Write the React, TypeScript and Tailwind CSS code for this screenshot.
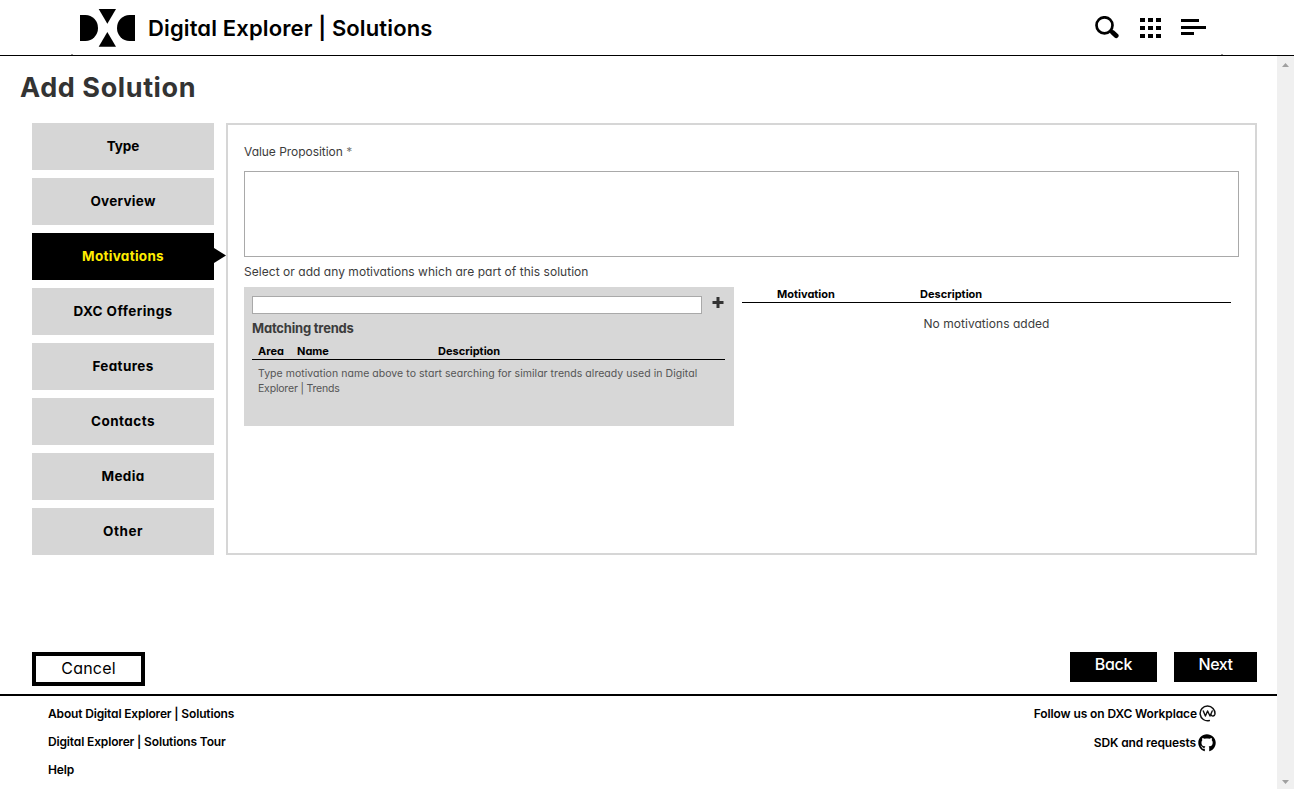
import { FaGithub } from "react-icons/fa";
import clsx from "clsx";

const steps = [
  { label: "Type", tracking: "tracking-[-0.1px]" },
  { label: "Overview", tracking: "tracking-[0.27px]" },
  { label: "Motivations", tracking: "tracking-[0.3px]" },
  { label: "DXC Offerings", tracking: "tracking-[0.43px]" },
  { label: "Features", tracking: "tracking-[0.37px]" },
  { label: "Contacts", tracking: "tracking-[0.45px]" },
  { label: "Media", tracking: "tracking-[0.35px]" },
  { label: "Other", tracking: "tracking-[0.55px]" },
];

function DxcLogo() {
  return (
    <svg width="55" height="38" viewBox="0 0 55 38" className="shrink-0">
      <path d="M0 6h5.500a12.500 13 0 0 1 0 26H0z" />
      <path d="M55 6h-5.500a12.500 13 0 0 0 0 26H55z" />
      <path d="M18.700 0h17.300L27.350 14.700z" />
      <path d="M18.700 37.800h17.300L27.350 23.100z" />
    </svg>
  );
}

function SearchIcon() {
  return (
    <svg width="24" height="23" viewBox="0 0 24 23" fill="none" stroke="black">
      <circle cx="9.500" cy="9.300" r="8" strokeWidth="2.700" />
      <path d="M15.200 14.700l1.500 1.500" strokeWidth="3" />
      <path d="M17.700 16.500l3.500 3.200" strokeWidth="4.800" strokeLinecap="round" />
    </svg>
  );
}

function WorkplaceIcon() {
  return (
    <svg width="17" height="17" viewBox="0 0 17 17" fill="none" stroke="#111" strokeLinecap="round" strokeLinejoin="round">
      <path d="M10.300 15.600A7.400 7.400 0 1 1 15.900 9.200C15.500 11.300 12.900 11.700 12 9.700" strokeWidth="1.500" />
      <path d="M4.300 6l2.100 5 2.200-5 2.400 5L13.200 6" strokeWidth="1.400" />
    </svg>
  );
}

function Header() {
  return (
    <header className="relative flex h-14 items-start border-b border-black pl-20">
      <div className="pt-[9px]">
        <DxcLogo />
      </div>
      <div className="ml-[13px] mt-3 text-[22px] font-semibold leading-8 tracking-[0.13px] whitespace-nowrap">
        Digital Explorer | Solutions
      </div>
      <div className="ml-auto mr-[88px] flex items-start">
        <button className="mt-[16px]">
          <SearchIcon />
        </button>
        <button className="ml-[21px] mt-[18px] grid grid-cols-3 gap-x-[3px] gap-y-[4px]">
          {Array.from({ length: 9 }, (_, i) => (
            <span key={i} className="h-[4px] w-[5px] bg-black" />
          ))}
        </button>
        <button className="ml-5 mt-[19px] flex w-[25px] flex-col gap-[3.500px]">
          <span className="h-[3px] w-[18px] bg-black" />
          <span className="h-[3px] w-[25px] bg-black" />
          <span className="h-[3px] w-[13px] bg-black" />
        </button>
      </div>
      <span className="absolute left-[71px] top-[54px] h-px w-[2px] bg-[#999]" />
      <span className="absolute left-[1221px] top-[54px] h-px w-[2px] bg-[#999]" />
    </header>
  );
}

function Steps() {
  return (
    <nav className="flex w-[182px] flex-col gap-2">
      {steps.map(({ label, tracking }) => {
        const active = label === "Motivations";
        return (
          <button
            key={label}
            className={clsx(
              "relative flex h-[47px] items-center justify-center text-[13.5px] font-bold",
              tracking,
              active ? "bg-black text-[#ffed00]" : "bg-[#d6d6d6] text-black",
            )}
          >
            {label}
            {active && (
              <svg width="12" height="16" viewBox="0 0 12 16" className="absolute top-[15px] left-full">
                <path d="M0 0l12 7.500L0 15z" />
              </svg>
            )}
          </button>
        );
      })}
    </nav>
  );
}

function Panel() {
  return (
    <section className="ml-3 h-[432px] w-[1031px] border-2 border-[#d6d6d6] px-4 pt-[18px] text-[#3c3c3c]">
      <label className="block text-[12px] leading-[18px] tracking-[-0.04px]">
        Value Proposition <span className="text-[#777]">*</span>
      </label>
      <textarea className="mt-[10px] block h-[86px] w-full resize-none border border-[#a9a9a9] bg-white" />
      <p className="mt-[6px] text-[12px] leading-[18px] tracking-[0.04px]">
        Select or add any motivations which are part of this solution
      </p>
      <div className="mt-[6px] flex gap-2">
        <div className="h-[139px] w-[490px] bg-[#d7d7d7] px-2 pt-[9px]">
          <div className="flex">
            <input className="h-[18px] w-[450px] border border-[#a9a9a9] bg-white" />
            <button className="ml-[10px] mt-px h-3">
              <svg width="12" height="12" viewBox="0 0 12 12" fill="#333">
                <path d="M4.500 0h3v4h4v3h-4v4h-3V7h-4V4h4z" />
              </svg>
            </button>
          </div>
          <h3 className="mt-[5px] text-[13px] font-bold leading-[18px] tracking-[-0.2px]">Matching trends</h3>
          <div className="mt-[6px] flex h-[17px] w-[473px] border-b border-black pl-[6px] text-[11px] font-bold leading-[17px] text-black">
            <span className="w-[39px]">Area</span>
            <span className="w-[141px]">Name</span>
            <span>Description</span>
          </div>
          <p className="mt-[6px] pl-[6px] text-[10.500px] leading-[15px] tracking-[0.04px] text-[#555]">
            <span className="whitespace-nowrap">
              Type motivation name above to start searching for similar trends already used in Digital
            </span>
            <br />
            <span className="tracking-[-0.19px]">Explorer | Trends</span>
          </p>
        </div>
        <div className="w-[489px]">
          <div className="flex h-4 border-b border-black pl-[35px] text-[11px] font-bold leading-[15px] text-black">
            <span className="w-[143px]">Motivation</span>
            <span>Description</span>
          </div>
          <p className="mt-3 text-center text-[12px] leading-[18px] tracking-[0.04px]">No motivations added</p>
        </div>
      </div>
    </section>
  );
}

function Footer() {
  return (
    <footer className="flex justify-between border-t-2 border-black pl-12 pr-[61px] pt-1 text-[12px] font-semibold leading-7 tracking-[-0.15px] text-black">
      <div className="flex flex-col">
        <a>About Digital Explorer | Solutions</a>
        <a>Digital Explorer | Solutions Tour</a>
        <a>Help</a>
      </div>
      <div className="flex flex-col items-end gap-px">
        <a className="flex h-7 items-center gap-[2px] tracking-[-0.11px]">
          Follow us on DXC Workplace
          <span className="pb-[2px]">
            <WorkplaceIcon />
          </span>
        </a>
        <a className="flex h-7 items-center gap-[2px] tracking-[-0.12px]">
          SDK and requests
          <FaGithub size={18} />
        </a>
      </div>
    </footer>
  );
}

function Scrollbar() {
  return (
    <div className="flex w-[17px] flex-col items-center justify-between bg-[#f0f0f0] pt-[7px] pb-[5px]">
      <svg width="7" height="4" viewBox="0 0 7 4" fill="#a0a0a0">
        <path d="M0 4l3.500-4L7 4z" />
      </svg>
      <svg width="7" height="4" viewBox="0 0 7 4" fill="#a0a0a0">
        <path d="M0 0l3.500 4L7 0z" />
      </svg>
    </div>
  );
}

export default function App() {
  return (
    <div className="h-[790px] w-[1294px] overflow-hidden bg-white font-['Inter',sans-serif] text-black [font-feature-settings:'cv11']">
      <Header />
      <div className="flex h-[733px]">
        <main className="w-[1277px]">
          <h1 className="ml-5 pt-3 text-[27px] font-bold leading-10 tracking-[0.6px] text-[#333]">Add Solution</h1>
          <div className="ml-8 mt-[15px] flex">
            <Steps />
            <Panel />
          </div>
          <div className="ml-8 mr-5 mt-[97px] flex h-[42px] items-start">
            <button className="h-[34px] w-[113px] border-4 border-black pb-[2px] text-[16px] leading-[24px] tracking-[0.2px]">
              Cancel
            </button>
            <button className="ml-auto h-[30px] w-[87px] bg-black pb-[5px] text-[16px] font-medium leading-[25px] tracking-[-0.3px] text-white">
              Back
            </button>
            <button className="ml-[17px] h-[30px] w-[83px] bg-black pb-[5px] text-[16px] font-medium leading-[25px] tracking-[-0.5px] text-white">
              Next
            </button>
          </div>
          <Footer />
        </main>
        <Scrollbar />
      </div>
    </div>
  );
}
